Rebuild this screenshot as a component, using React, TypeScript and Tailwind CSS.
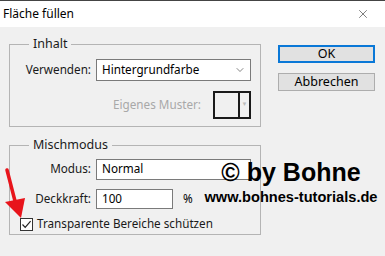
import { ChevronDown, X } from 'lucide-react'

const font = { fontFamily: '"Noto Sans", "Open Sans", sans-serif' }

function Field({ label, children, dim }: { label: string; children: React.ReactNode; dim?: boolean }) {
  return (
    <div className="flex items-center">
      <span className={`w-[82px] shrink-0 pr-[5px] text-right ${dim ? 'text-[#a5a5a5]' : 'text-[#1a1a1a]'}`}>{label}</span>
      {children}
    </div>
  )
}

export default function App() {
  return (
    <div className="relative h-[256px] w-[385px] overflow-hidden bg-[#f0f0f0] text-[11.7px] leading-none" style={font}>
      <div className="flex h-[27px] items-center justify-between border-t border-[#444] bg-white pl-[3px] pr-[15px]">
        <span className="text-[12px] text-black">Fläche füllen</span>
        <X size={14} strokeWidth={1} className="text-[#222]" />
      </div>

      <div className="flex gap-[17px] pl-[9px]">
        <div className="flex w-[252px] flex-col gap-[12px] pt-[11px]">
          <fieldset className="h-[89px] border border-[#b4b4b4] pl-[4px]">
            <legend className="ml-[15px] px-[4px] text-[12.5px] text-[#1a1a1a]">Inhalt</legend>
            <div className="mt-[8px] flex flex-col gap-[10px]">
              <Field label="Verwenden:">
                <div className="flex h-[22px] w-[155px] items-center justify-between border border-[#7a7a7a] bg-white pl-[5px] pr-[4px]">
                  <span>Hintergrundfarbe</span>
                  <ChevronDown size={12} strokeWidth={1.2} className="text-[#333]" />
                </div>
              </Field>
              <div className="flex items-center justify-end gap-[12px] pr-[9px]">
                <span className="text-[#a8a8a8]">Eigenes Muster:</span>
                <div className="flex h-[28px] w-[38px] border-2 border-[#1a1a1a] bg-[#f0f0f0]">
                  <div className="flex-1 border-r-2 border-[#1a1a1a]" />
                  <div className="flex w-[9px] items-start justify-center pt-[8px] text-[6px] text-[#bbb]">▼</div>
                </div>
              </div>
            </div>
          </fieldset>

          <fieldset className="h-[96px] border border-[#b4b4b4] pl-[4px]">
            <legend className="ml-[15px] px-[4px] text-[12.5px] text-[#1a1a1a]">Mischmodus</legend>
            <div className="mt-[7px] flex flex-col gap-[9px]">
              <Field label="Modus:">
                <div className="flex h-[21px] w-[155px] items-center border border-[#7a7a7a] bg-white pl-[5px]">
                  <span>Normal</span>
                </div>
              </Field>
              <Field label="Deckkraft:">
                <div className="flex h-[20px] w-[77px] items-center border border-[#7a7a7a] bg-white pl-[5px]">
                  <span>100</span>
                </div>
                <span className="ml-[10px]">%</span>
              </Field>
              <div className="ml-[6px] flex items-center gap-[4px]">
                <div className="flex h-[13px] w-[13px] items-center justify-center border border-[#333] bg-white">
                  <svg width="11" height="11" viewBox="0 0 11 11">
                    <path d="M1.5 5.5 L4.2 8.3 L9.6 2.2" fill="none" stroke="#222" strokeWidth="1.2" />
                  </svg>
                </div>
                <span className="text-[#1a1a1a]">Transparente Bereiche schützen</span>
              </div>
            </div>
          </fieldset>
        </div>

        <div className="flex w-[97px] flex-col gap-[10px] pt-[18px]">
          <button className="h-[18px] border-2 border-[#0a78d7] bg-[#e1e1e1] text-[12.5px] leading-none text-black">OK</button>
          <button className="h-[18px] border border-[#adadad] bg-[#e1e1e1] text-[12.5px] leading-none text-black">Abbrechen</button>
        </div>
      </div>

      <svg className="absolute left-0 top-[165px]" width="34" height="58" viewBox="0 0 34 58">
        <path d="M7 5 L15.5 38" stroke="#e8141b" strokeWidth="3.5" strokeLinecap="round" />
        <path d="M5 37 L25 33 L21 53 Z" fill="#e8141b" />
      </svg>

      <div
        className="absolute left-[203px] top-[158px] flex w-[176px] flex-col items-center font-bold text-black"
        style={{ fontFamily: '"Liberation Sans", Arial, sans-serif' }}
      >
        <span className="text-[25px] leading-[28px]">© by Bohne</span>
        <span className="mt-[3px] text-[14.6px] leading-[17px]">www.bohnes-tutorials.de</span>
      </div>
    </div>
  )
}
